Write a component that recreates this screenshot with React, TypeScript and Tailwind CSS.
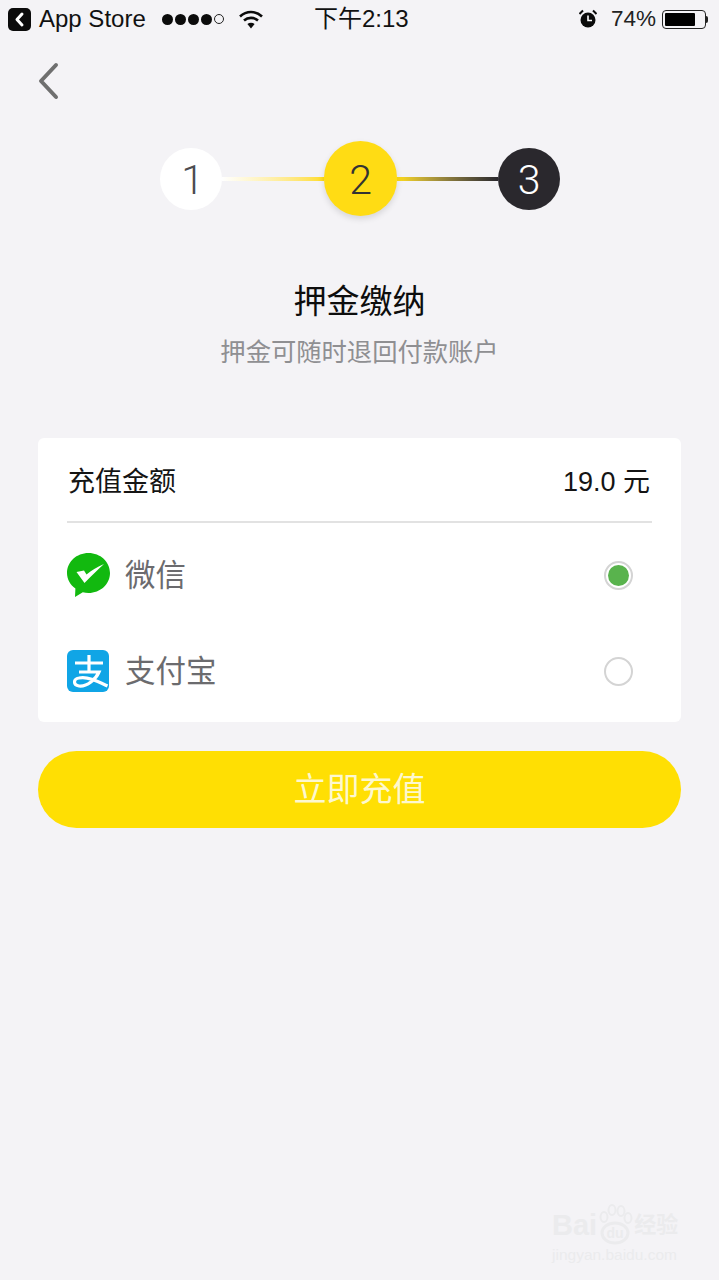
const cjk = "font-['Liberation_Sans','Noto_Sans_CJK_SC',sans-serif]";
const digit = "font-['Roboto',sans-serif] font-light text-[41px] leading-none pt-[4px]";

function StatusBar() {
  return (
    <div className="flex h-[38px] items-center pl-[8px] pr-[11px] text-[24px] leading-none text-[#111]">
      <svg width="23" height="23" viewBox="0 0 23 23" className="shrink-0">
        <rect width="23" height="23" rx="5" fill="#0b0b0b" />
        <path d="M14 6 L9 11.5 L14 17" fill="none" stroke="#fff" strokeWidth="3" strokeLinecap="round" strokeLinejoin="round" />
      </svg>
      <span className="ml-[8px] w-[123px] shrink-0">App Store</span>
      <div className="flex w-[77px] shrink-0 items-center gap-[2px]">
        <span className="h-[11px] w-[11px] rounded-full bg-[#0b0b0b]" />
        <span className="h-[11px] w-[11px] rounded-full bg-[#0b0b0b]" />
        <span className="h-[11px] w-[11px] rounded-full bg-[#0b0b0b]" />
        <span className="h-[11px] w-[11px] rounded-full bg-[#0b0b0b]" />
        <span className="h-[10px] w-[10px] rounded-full border border-[#222]" />
      </div>
      <svg width="24" height="19" viewBox="0 0 24 19" className="shrink-0">
        <path d="M1 6.5 C7.5 0.5 16.5 0.5 23 6.5" fill="none" stroke="#0b0b0b" strokeWidth="2.6" />
        <path d="M5 10.5 C9 7 15 7 19 10.5" fill="none" stroke="#0b0b0b" strokeWidth="2.6" />
        <path d="M8.4 14 C10.5 12.4 13.5 12.4 15.6 14 L12 18.5 Z" fill="#0b0b0b" />
      </svg>
      <span className={`ml-[51px] shrink-0 ${cjk}`}>下午2:13</span>
      <div className="ml-auto flex items-center">
        <svg width="18" height="20" viewBox="0 0 18 20" className="shrink-0">
          <circle cx="9" cy="11" r="7.5" fill="#0b0b0b" />
          <path d="M9 6.5 V11.5 H13" fill="none" stroke="#fff" strokeWidth="1.6" />
          <path d="M0.5 5 L4 1.5 M17.5 5 L14 1.5" stroke="#0b0b0b" strokeWidth="2" />
        </svg>
        <span className="ml-[14px] text-[22.5px] text-[#222]">74%</span>
        <div className="ml-[6px] flex items-center">
          <div className="h-[19px] w-[44px] rounded-[4px] border border-[#222] p-[2px]">
            <div className="h-full w-[30px] rounded-[1px] bg-black" />
          </div>
          <div className="h-[7px] w-[2px] rounded-r-full bg-[#222]" />
        </div>
      </div>
    </div>
  );
}

function Stepper() {
  return (
    <div className="mt-[41px] flex items-center justify-center pl-[1px]">
      <div className={`z-10 flex h-[62px] w-[62px] items-center justify-center rounded-full bg-white pl-[3px] text-[#4c4c50] ${digit}`}>1</div>
      <div className="h-[4px] w-[102px] bg-gradient-to-r from-white to-[#ffdc14]" />
      <div className={`z-10 flex h-[75px] w-[73px] items-center justify-center rounded-full bg-[#ffdc14] text-[#333] shadow-[0_3px_6px_rgba(0,0,0,0.12)] ${digit}`}>2</div>
      <div className="h-[4px] w-[101px] bg-gradient-to-r from-[#ffdc14] to-[#2a282d]" />
      <div className={`z-10 flex h-[62px] w-[62px] items-center justify-center rounded-full bg-[#2a282d] text-white ${digit}`}>3</div>
    </div>
  );
}

function WeChatIcon() {
  return (
    <svg width="43" height="44" viewBox="0 0 43 44" className="shrink-0">
      <path d="M21.5 0 C33.4 0 43 8.8 43 20 C43 31.2 33.4 40 21.5 40 C19.5 40 17.6 39.8 15.8 39.3 L8 44 L8.4 35.6 C3.3 31.9 0 26.3 0 20 C0 8.8 9.6 0 21.5 0 Z" fill="#12b90f" />
      <path d="M9.5 19 L17 17.5 L19.5 21.5 C24.5 17.5 30.5 13.5 37 11 C30.5 17 24 23 17.5 30 Z" fill="#fff" />
    </svg>
  );
}

function AlipayIcon() {
  return (
    <svg width="42" height="42" viewBox="0 0 42 42" className="shrink-0">
      <rect width="42" height="42" rx="6" fill="#10a5e6" />
      <path d="M8 13 H36 M22 5 V22 M12 22 H32 C29 29 20 37 12 36 C6 35 6 29 12 28 C20 26 30 31 40.5 36" fill="none" stroke="#fff" strokeWidth="3.2" />
    </svg>
  );
}

function PayRow({ icon, label, radio }: { icon: React.ReactNode; label: string; radio: React.ReactNode }) {
  return (
    <div className="flex h-[96px] items-center pl-[29px] pr-[48px]">
      <div className="flex w-[58px] shrink-0 items-center">{icon}</div>
      <span className="text-[30.5px] leading-none text-[#6b6b6e]">{label}</span>
      <div className="ml-auto">{radio}</div>
    </div>
  );
}

export default function App() {
  return (
    <div className={`relative min-h-[1280px] w-[719px] overflow-hidden bg-[#f4f3f6] ${cjk}`}>
      <StatusBar />
      <div className="mt-[24px] pl-[38px]">
        <svg width="21" height="38" viewBox="0 0 21 38">
          <path d="M18 3 L3 19 L18 35" fill="none" stroke="#6f6f6f" strokeWidth="4" strokeLinecap="round" strokeLinejoin="round" />
        </svg>
      </div>
      <Stepper />
      <h1 className="mt-[68px] text-center text-[33px] font-normal leading-[36px] text-[#0d0d0d]">押金缴纳</h1>
      <p className="mt-[17px] text-center text-[25.3px] leading-[30px] text-[#8f8f92]">押金可随时退回付款账户</p>

      <div className="mx-[38px] mt-[71px] rounded-[6px] bg-white pb-[3px]">
        <div className="mx-[29px] flex h-[85px] items-center justify-between border-b-2 border-[#e2e2e2] pl-[1px] pt-[6px] text-[27px] leading-none text-[#141414]">
          <span>充值金额</span>
          <span className="pr-[2px]">19.0 元</span>
        </div>
        <div className="pt-[4px]">
          <PayRow
            icon={<WeChatIcon />}
            label="微信"
            radio={
              <div className="flex h-[29px] w-[29px] items-center justify-center rounded-full border-2 border-[#d4d4d4]">
                <div className="h-[21px] w-[21px] rounded-full bg-[#59b34d]" />
              </div>
            }
          />
          <PayRow
            icon={<AlipayIcon />}
            label="支付宝"
            radio={<div className="h-[29px] w-[29px] rounded-full border-2 border-[#d4d4d4]" />}
          />
        </div>
      </div>

      <div className="mx-[38px] mt-[29px] flex h-[77px] items-center justify-center rounded-full bg-[#ffdf03] text-[33px] text-[#fdf8cf]">
        立即充值
      </div>

      {/* site stamp in the lower corner */}
      <div className="absolute left-[552px] top-[1203px] flex w-[130px] flex-col items-start text-[#ebebed]">
        <div className="flex items-center">
          <span className="text-[29px] font-bold leading-[44px]">Bai</span>
          <svg width="36" height="44" viewBox="0 0 36 44">
            <ellipse cx="18" cy="30" rx="13" ry="10" fill="none" stroke="#ebebed" strokeWidth="3" />
            <ellipse cx="7" cy="14" rx="3.5" ry="5" fill="none" stroke="#ebebed" strokeWidth="2" />
            <ellipse cx="15" cy="7" rx="3.5" ry="5" fill="none" stroke="#ebebed" strokeWidth="2" />
            <ellipse cx="24" cy="8" rx="3.5" ry="5" fill="none" stroke="#ebebed" strokeWidth="2" />
            <ellipse cx="31" cy="15" rx="3.5" ry="5" fill="none" stroke="#ebebed" strokeWidth="2" />
            <text x="18" y="35" textAnchor="middle" fontSize="14" fontWeight="700" fill="#ebebed" fontFamily="Liberation Sans">du</text>
          </svg>
          <span className="ml-[1px] text-[22px] font-bold leading-none">经验</span>
        </div>
        <span className="text-[15.5px] leading-[16px]">jingyan.baidu.com</span>
      </div>
    </div>
  );
}
